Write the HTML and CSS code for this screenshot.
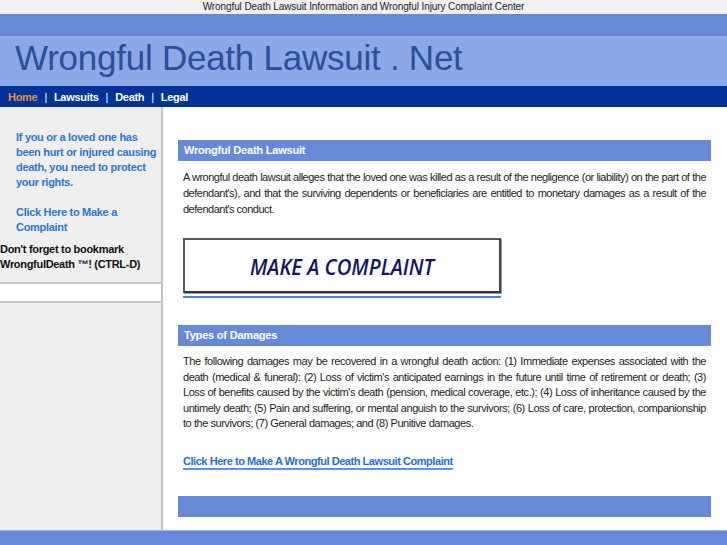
FILE: index.html
```html
<!DOCTYPE html>
<html>
<head>
<meta charset="utf-8">
<title>Wrongful Death Lawsuit . Net</title>
<link rel="stylesheet" href="styles.css">
</head>
<body>
<div class="topline">Wrongful Death Lawsuit Information and Wrongful Injury Complaint Center</div>
<header class="banner">
  <div class="band"></div>
  <div class="titlebar"><h1 class="title">Wrongful Death Lawsuit . Net</h1></div>
</header>
<nav class="nav">
  <a class="nav-link active" href="#">Home</a><span class="sep">|</span><a class="nav-link" href="#">Lawsuits</a><span class="sep">|</span><a class="nav-link" href="#">Death</a><span class="sep">|</span><a class="nav-link" href="#">Legal</a>
</nav>
<div class="layout">
  <aside class="side">
    <p class="side-text">If you or a loved one has been hurt or injured causing death, you need to protect your rights.</p>
    <p class="side-text"><a class="side-link" href="#">Click Here to Make a Complaint</a></p>
    <p class="bookmark">Don't forget to bookmark WrongfulDeath &trade;! (CTRL-D)</p>
    <div class="side-box"></div>
  </aside>
  <main class="main">
    <h2 class="section-head first">Wrongful Death Lawsuit</h2>
    <p class="text t1">A wrongful death lawsuit alleges that the loved one was killed as a result of the negligence (or liability) on the part of the defendant's), and that the surviving dependents or beneficiaries are entitled to monetary damages as a result of the defendant's conduct.</p>
    <a class="complaint" href="#"><span class="complaint-box"><span class="complaint-text">MAKE A COMPLAINT</span></span></a>
    <h2 class="section-head second">Types of Damages</h2>
    <p class="text t2">The following damages may be recovered in a wrongful death action: (1) Immediate expenses associated with the death (medical &amp; funeral): (2) Loss of victim's anticipated earnings in the future until time of retirement or death; (3) Loss of benefits caused by the victim's death (pension, medical coverage, etc.); (4) Loss of inheritance caused by the untimely death; (5) Pain and suffering, or mental anguish to the survivors; (6) Loss of care, protection, companionship to the survivors; (7) General damages; and (8) Punitive damages.</p>
    <a class="main-link" href="#">Click Here to Make A Wrongful Death Lawsuit Complaint</a>
    <div class="end-bar"></div>
  </main>
</div>
<footer class="foot"></footer>
</body>
</html>
```
FILE: styles.css
```css
* { box-sizing: border-box; }
html, body { margin: 0; padding: 0; }
body {
  background: #ffffff;
  font-family: "Liberation Sans", Arial, sans-serif;
  color: #222;
  width: 727px;
  overflow: hidden;
}
.topline {
  height: 14px;
  background: #f0f0f0;
  font-size: 10px;
  line-height: 14px;
  text-align: center;
  color: #222;
  letter-spacing: -0.1px;
}
.band {
  height: 22px;
  background: #6789da;
}
.titlebar {
  height: 50px;
  background: #8aa9e6;
  padding-left: 15px;
}
.title {
  margin: 0;
  font-weight: normal;
  font-size: 35px;
  line-height: 44px;
  color: #2b5099;
  letter-spacing: -0.25px;
}
.nav {
  height: 21px;
  background: #003399;
  display: flex;
  align-items: center;
  padding-left: 8px;
  font-size: 11px;
  font-weight: bold;
  letter-spacing: -0.3px;
}
.nav-link { color: #fff; text-decoration: none; }
.nav-link.active { color: #f28a3c; }
.sep { color: #fff; font-weight: normal; padding: 0 7px; }
.layout {
  display: flex;
  min-height: 423px;
}
.side {
  width: 163px;
  flex: none;
  background: #efefef;
  border-right: 2px solid #c4c4c4;
  padding-top: 23px;
  font-size: 11px;
  font-weight: bold;
  letter-spacing: -0.3px;
}
.side-text {
  margin: 0 0 15px 0;
  padding: 0 4px 0 16px;
  line-height: 15px;
  color: #2a77d6;
}
.side-link { color: #2a77d6; text-decoration: none; }
.bookmark {
  margin: -8px 0 0 0;
  line-height: 15px;
  color: #111;
}
.side-box {
  margin-top: 10px;
  height: 21px;
  background: #fff;
  border-top: 2px solid #c8c8c8;
  border-bottom: 2px solid #c8c8c8;
}
.main {
  flex: 1;
  padding: 33px 16px 0 15px;
}
.section-head {
  margin: 0;
  height: 21px;
  line-height: 21px;
  background: #6789da;
  color: #fff;
  font-size: 11px;
  font-weight: bold;
  padding-left: 6px;
  letter-spacing: -0.2px;
}
.text {
  margin: 8px 0 0 0;
  padding: 0 5px 0 5px;
  font-size: 11px;
  text-align: justify;
  color: #222;
  letter-spacing: -0.45px;
}
.t1 { line-height: 16px; letter-spacing: -0.5px; }
.t2 { line-height: 15.5px; }
.complaint {
  display: block;
  width: 318px;
  margin: 21px 0 0 5px;
  padding-bottom: 3px;
  border-bottom: 2px solid #4a8ad8;
  text-decoration: none;
}
.complaint-box {
  display: flex;
  align-items: center;
  justify-content: center;
  height: 55px;
  background: #fff;
  border: 2px solid #555;
  border-right-color: #444;
  border-bottom-color: #333;
  box-shadow: 1px 1px 0 #999;
}
.complaint-text {
  font-family: "Open Sans", sans-serif;
  font-style: italic;
  font-weight: 600;
  font-size: 22px;
  color: #14146a;
  letter-spacing: 0;
  transform: scaleX(0.92);
}
.section-head.second { margin-top: 27px; }
.main-link {
  display: inline-block;
  margin: 22px 0 0 5px;
  font-size: 11px;
  font-weight: bold;
  color: #1e6fd0;
  text-decoration: none;
  border-bottom: 2px solid #5b95dc;
  line-height: 14px;
  letter-spacing: -0.45px;
}
.end-bar {
  margin-top: 26px;
  height: 21px;
  background: #6789da;
}
.foot {
  height: 15px;
  background: #6789da;
  border-top: 1px solid #9fb5ea;
}
```
